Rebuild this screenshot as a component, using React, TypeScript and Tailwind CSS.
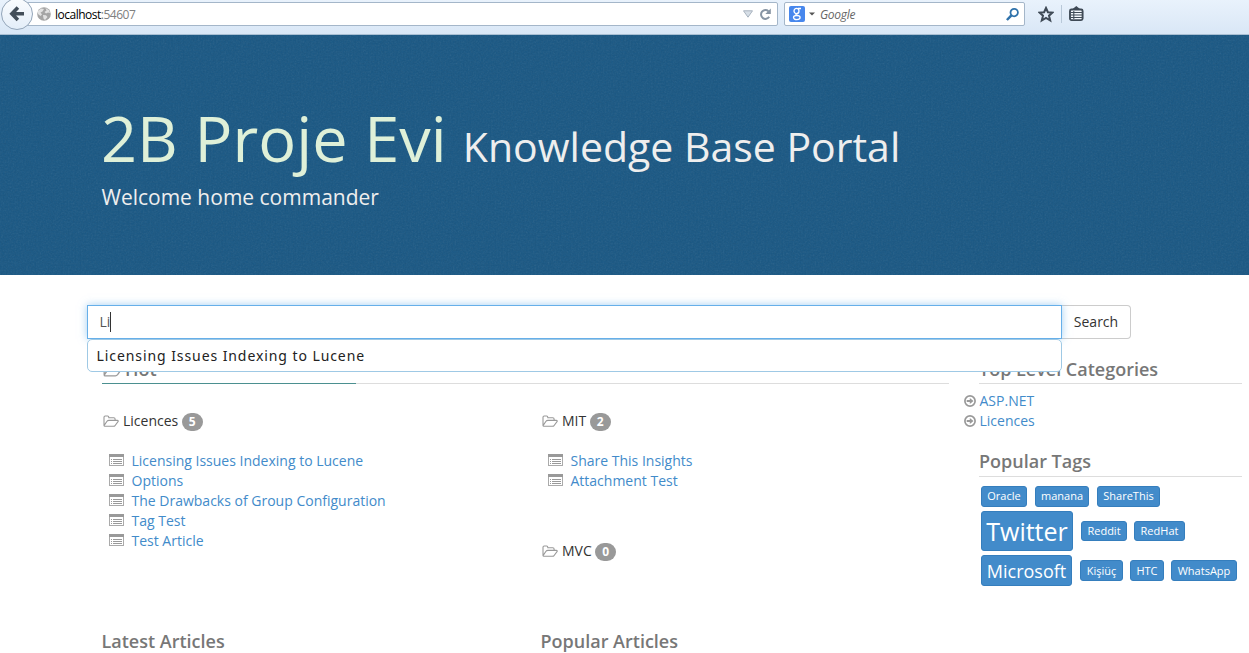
import React from 'react';

const FolderOpen = ({ className = '', width = 16, height = 13 }: { className?: string; width?: number; height?: number }) => (
  <svg className={className} width={width} height={height} viewBox="0 0 16 13" preserveAspectRatio="none" fill="none" stroke="#999" strokeWidth="1.1" strokeLinejoin="round">
    <path d="M1 10.4V2.3C1 1.5 1.5 1 2.2 1H4.6C5.4 1 5.8 1.5 5.8 2.2V2.7H10.8C11.6 2.7 12.1 3.2 12.1 4V5.3M1 10.6L4 6.3C4.5 5.6 5 5.4 5.8 5.4H14.3C15.2 5.4 15.5 5.9 15 6.6L12.3 10.3C11.8 10.9 11.2 11.3 10.4 11.3H1.8C1.3 11.3 1 11 1 10.5Z" />
  </svg>
);

const ListAlt = () => (
  <svg className="shrink-0" width="15" height="12" viewBox="0 0 15 12" shapeRendering="crispEdges">
    <rect x="0.5" y="0.5" width="14" height="11" fill="#fff" stroke="#aaa" />
    <path d="M0 0H15V3H0Z" fill="#999" />
    <path d="M2 5H3V6H2ZM4 5H13V6H4ZM2 7H3V8H2ZM4 7H13V8H4ZM2 9H3V10H2ZM4 9H13V10H4Z" fill="#999" />
  </svg>
);

const ArrowCircle = () => (
  <svg className="shrink-0" width="12" height="12" viewBox="0 0 12 12">
    <circle cx="6" cy="6" r="5.1" fill="none" stroke="#999" strokeWidth="1.7" />
    <path d="M2.7 5H5.8V2.9L9.5 6L5.8 9.1V7H2.7Z" fill="#999" />
  </svg>
);

const CategoryTitle = ({ name, count }: { name: string; count: number }) => (
  <div className="flex h-5 items-center text-[14px] text-[#333]">
    <FolderOpen className="mr-1 ml-px" />
    <span>{name}</span>
    <span className="mt-px ml-[3.5px] flex h-[18px] w-[21px] items-center justify-center rounded-[10px] bg-[#999] text-[12px] font-bold text-white">{count}</span>
  </div>
);

const Articles = ({ items }: { items: string[] }) => (
  <ul className="mt-5 pl-[7px]">
    {items.map((t) => (
      <li key={t} className="flex h-5 items-center gap-[7.5px] text-[14px] whitespace-nowrap text-[#428bca]">
        <span className="flex h-5 items-start pt-[3px]"><ListAlt /></span>
        <a>{t}</a>
      </li>
    ))}
  </ul>
);

const Tag = ({ label, className }: { label: string; className: string }) => (
  <a className={`flex shrink-0 items-center justify-center rounded-[3px] border border-[#357ebd] bg-[#428bca] whitespace-nowrap text-white ${className}`}>{label}</a>
);

const Toolbar = () => (
  <header className="flex h-[35px] items-start border-b border-[#a9bfd3] bg-gradient-to-b from-[#e9f2fc] to-[#d9e7f6]">
    <div className="relative z-10 -mt-[2px] ml-px flex h-8 w-8 shrink-0 items-center justify-center rounded-full border border-[#93a5b9] bg-gradient-to-b from-[#fafcfe] to-[#e4eef9]">
      <svg width="16" height="16" viewBox="0 0 16 16" fill="none" stroke="#434e59" strokeWidth="3.6">
        <path d="M8.9 1.6L2.9 7.8L8.9 14M3.2 7.8H15" />
      </svg>
    </div>
    <div className="mt-[2px] -ml-[6px] flex h-6 w-[751px] shrink-0 items-center rounded-r-[2px] border border-[#a4b6c9] bg-white pl-[9px]">
      <svg width="14" height="14" viewBox="0 0 14 14">
        <circle cx="7" cy="7" r="6.8" fill="#a5a5a5" />
        <path d="M1 4L4 1.5L7 2L5.5 4.5L3.5 5.5L5 7.5L3.5 9L1 7ZM8.5 1L12 3.2L13 6L11 5.5L9 6.5L7.5 5L9.5 3.5ZM6 8L9 8.3L10.5 10L8 13L6.5 11.5Z" fill="#e2e2e2" />
      </svg>
      <span className="mt-px ml-1 text-[12px] tracking-[-0.5px] text-black">localhost<span className="text-[#808080]">:54607</span></span>
      <svg className="ml-auto" width="10" height="8" viewBox="0 0 10 8"><path d="M0.5 0.8H9.5L5 7.2Z" fill="#d7dfe7" stroke="#a8b3bf" /></svg>
      <svg className="mr-[5px] ml-[6px]" width="13" height="13" viewBox="0 0 13 13"><path d="M9.4 3.2A4.4 4.4 0 1 0 10.2 8.8" fill="none" stroke="#8795a4" strokeWidth="2" /><path d="M11.8 0.5V6H6.3Z" fill="#8795a4" /></svg>
    </div>
    <div className="mt-[2px] ml-[6px] flex h-6 w-[241px] shrink-0 items-center rounded-[2px] border border-[#a4b6c9] bg-white pl-1">
      <span className="flex h-4 w-4 items-center justify-center rounded-[2px] bg-[#4787ed]">
        <svg width="10" height="14" viewBox="0 0 10 14" fill="none" stroke="#fff" strokeWidth="1.3"><ellipse cx="4.5" cy="4" rx="2.5" ry="2.7" /><path d="M6 1.5H9M6 6C2.8 7 3.5 7.6 5.5 8.3" /><ellipse cx="4.8" cy="10.6" rx="3.3" ry="2.1" /></svg>
      </span>
      <svg className="ml-[4px]" width="6" height="4" viewBox="0 0 6 4"><path d="M0 0.5H6L3 3.5Z" fill="#555" /></svg>
      <span className="mt-px ml-[5px] text-[12px] tracking-[-0.3px] text-[#666] italic">Google</span>
      <svg className="mr-[5px] ml-auto" width="13" height="13" viewBox="0 0 13 13" fill="none" stroke="#2f72ab"><circle cx="8.2" cy="4.6" r="3.7" strokeWidth="1.8" /><path d="M5.4 7.4L0.9 12" strokeWidth="2.5" /></svg>
    </div>
    <svg className="mt-[6px] ml-[13px] shrink-0" width="16" height="17" viewBox="0 0 16 17"><path d="M8 2L9.9 6.2L14.5 6.6L11 9.7L12.2 14.5L8 12L3.8 14.5L5 9.7L1.5 6.6L6.1 6.2Z" fill="none" stroke="#3f4a56" strokeWidth="2" /></svg>
    <div className="mt-[5px] ml-[7px] h-[18px] w-px bg-[#b8c8d8]" />
    <svg className="mt-[6px] ml-[7px] shrink-0" width="15" height="16" viewBox="0 0 15 16"><rect x="1" y="3.5" width="12.6" height="10.6" rx="1.5" fill="#f4f8fc" stroke="#3f4a56" strokeWidth="1.9" /><path d="M3.6 3L7.3 0L11 3Z" fill="#3f4a56" /><path d="M2 6.5H13M2 9H13M2 11.5H13M4.8 5V13" stroke="#3f4a56" strokeWidth="1.1" /></svg>
  </header>
);

export default function App() {
  return (
    <div className="h-[653px] w-[1249px] overflow-hidden bg-white font-['Open_Sans',sans-serif] leading-5">
      <Toolbar />
      <section className="relative h-[240px] overflow-hidden bg-[#1a5986] pl-[102px]">
        <svg className="absolute inset-0 opacity-[0.13]" width="1249" height="240">
          <filter id="grain" colorInterpolationFilters="sRGB"><feTurbulence type="fractalNoise" baseFrequency="0.6" numOctaves="2" seed="3" /><feColorMatrix type="saturate" values="0" /></filter>
          <rect width="1249" height="240" filter="url(#grain)" />
        </svg>
        <div className="relative">
          <h1 className="-ml-px flex items-baseline pt-[68px] text-[63px] leading-[70px] whitespace-nowrap text-[#dff0d8]">
            <span className="tracking-[0.1px]">2B Proje Evi</span>
            <small className="ml-[16px] text-[41px] leading-[41px] text-[#eee]">Knowledge Base Portal</small>
          </h1>
          <p className="mt-[9px] -ml-[0.5px] text-[21px] leading-[30px] text-[#eee]">Welcome home commander</p>
        </div>
      </section>
      <main className="pt-[30px]">
        <div className="relative ml-[87px] flex h-[34px] w-[1044px]">
          <div className="relative z-10 flex w-[975px] items-center border border-[#66afe9] bg-white pl-[11.5px] text-[14px] text-[#555] shadow-[0_0_8px_rgba(102,175,233,0.6)]">
            Li<span className="-ml-[0.5px] h-5 w-px bg-[#333]" />
          </div>
          <button className="flex-1 rounded-r-[4px] border border-l-0 border-[#ccc] bg-white text-[14px] text-[#333]">Search</button>
          <div className="absolute top-[34px] left-0 z-20 flex h-[33px] w-[975px] items-center rounded-[5px] border border-[#9fc9e5] bg-white pt-px pl-[8.5px] font-['Noto_Sans',sans-serif] text-[14px] tracking-[0.92px] text-[#222]">Licensing Issues Indexing to Lucene</div>
        </div>
        <div className="flex pl-[102px]">
          <div className="w-[847px] shrink-0">
            <div className="flex h-[45px] items-end border-b border-[#ddd]">
              <h4 className="-mb-px flex h-[28px] w-[254px] items-start border-b border-[#4b9090] text-[18px] font-semibold text-[#777]">
                <FolderOpen className="mt-[6px] mr-[4px] ml-px" width={19} height={16} /><span className="mt-[3px] -ml-px">Hot</span>
              </h4>
            </div>
            <div className="flex pt-[27px]">
              <div className="w-[439px]">
                <CategoryTitle name="Licences" count={5} />
                <Articles items={['Licensing Issues Indexing to Lucene', 'Options', 'The Drawbacks of Group Configuration', 'Tag Test', 'Test Article']} />
              </div>
              <div>
                <CategoryTitle name="MIT" count={2} />
                <Articles items={['Share This Insights', 'Attachment Test']} />
                <div className="mt-[50px]"><CategoryTitle name="MVC" count={0} /></div>
              </div>
            </div>
            <div className="mt-[70px] -ml-[0.5px] flex text-[18px] font-semibold text-[#777]">
              <h4 className="w-[439px]">Latest Articles</h4>
              <h4>Popular Articles</h4>
            </div>
          </div>
          <aside className="w-[278px] pl-[15px]">
            <h4 className="ml-[15px] h-[45px] w-[263px] border-b border-[#ddd] pt-[20px] text-[18px] font-semibold text-[#777]">Top Level Categories</h4>
            <ul className="mt-[7px] text-[14px] text-[#428bca]">
              {['ASP.NET', 'Licences'].map((t) => <li key={t} className="flex h-5 items-center gap-[3.5px]"><ArrowCircle />{t}</li>)}
            </ul>
            <h4 className="mt-[20px] ml-[15px] h-[26px] w-[263px] border-b border-[#ddd] text-[18px] font-semibold text-[#777]">Popular Tags</h4>
            <div className="mt-[9px] ml-[17px] text-[11px]">
              <div className="flex h-[21px] gap-2"><Tag label="Oracle" className="w-[46px] pb-px" /><Tag label="manana" className="w-[54px] pb-px" /><Tag label="ShareThis" className="w-[63px] pb-px" /></div>
              <div className="mt-1 flex h-10 items-center"><Tag label="Twitter" className="h-10 w-[92px] pb-px text-[25px]" /><Tag label="Reddit" className="ml-2 h-5 w-[46px]" /><Tag label="RedHat" className="ml-[7px] h-5 w-[51px]" /></div>
              <div className="mt-1 flex h-[31px] items-center"><Tag label="Microsoft" className="h-[31px] w-[91px] pt-px text-[18px]" /><Tag label="Kişiüç" className="ml-2 h-[21px] w-[43px] pt-px" /><Tag label="HTC" className="ml-[7px] h-[21px] w-[34px] pt-px" /><Tag label="WhatsApp" className="ml-[7px] h-[21px] w-[66px] pt-px" /></div>
            </div>
          </aside>
        </div>
      </main>
    </div>
  );
}
